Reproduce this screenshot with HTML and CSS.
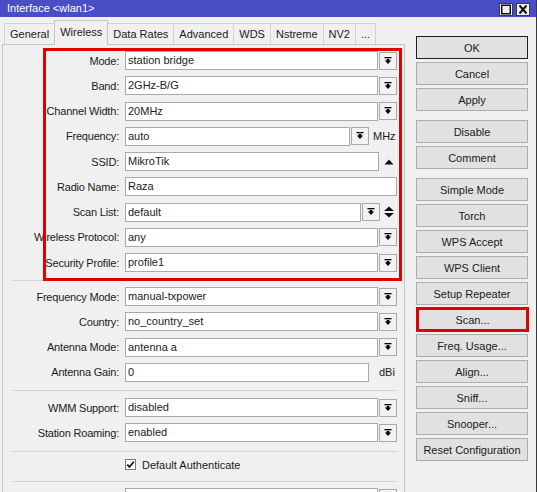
FILE: index.html
```html
<!DOCTYPE html>
<html>
<head>
<meta charset="utf-8">
<title>Interface &lt;wlan1&gt;</title>
<link rel="stylesheet" href="styles.css">
</head>
<body>
<svg class="defs" width="0" height="0" aria-hidden="true">
  <defs>
    <symbol id="dd" viewBox="0 0 16 16">
      <rect x="4.5" y="4" width="7" height="1.3" fill="#000"/>
      <polygon points="6.7,6 9.3,6 9.3,7.6 11.2,7.6 8,11 4.8,7.6 6.7,7.6" fill="#000"/>
    </symbol>
  </defs>
</svg>
<div class="window">
  <div class="titlebar">
    <span class="title">Interface &lt;wlan1&gt;</span>
    <div class="tbtns">
      <span class="tbtn"><svg width="12" height="11" viewBox="0 0 12 11"><rect x="1.75" y="1.25" width="8.5" height="8.5" fill="none" stroke="#111" stroke-width="1.5"/></svg></span>
      <span class="tbtn"><svg width="12" height="11" viewBox="0 0 12 11"><path d="M2.5 1.5 L9.5 9.5 M9.5 1.5 L2.5 9.5" stroke="#111" stroke-width="2"/></svg></span>
    </div>
  </div>
  <div class="main">
    <div class="left">
      <div class="tabs">
        <span class="tab">General</span>
        <span class="tab active">Wireless</span>
        <span class="tab">Data Rates</span>
        <span class="tab">Advanced</span>
        <span class="tab">WDS</span>
        <span class="tab">Nstreme</span>
        <span class="tab">NV2</span>
        <span class="tab">...</span>
      </div>
      <div class="panel">
        <div class="mark"></div>
        <div class="group">
          <div class="row"><span class="lbl">Mode:</span><span class="inp">station bridge</span><span class="dd"><svg width="16" height="16"><use href="#dd"/></svg></span></div>
          <div class="row"><span class="lbl">Band:</span><span class="inp">2GHz-B/G</span><span class="dd"><svg width="16" height="16"><use href="#dd"/></svg></span></div>
          <div class="row"><span class="lbl">Channel Width:</span><span class="inp">20MHz</span><span class="dd"><svg width="16" height="16"><use href="#dd"/></svg></span></div>
          <div class="row"><span class="lbl">Frequency:</span><span class="inp w-freq">auto</span><span class="dd"><svg width="16" height="16"><use href="#dd"/></svg></span><span class="unit u-mhz">MHz</span></div>
          <div class="row"><span class="lbl">SSID:</span><span class="inp w-ssid">MikroTik</span><span class="arr-up"><svg width="10" height="6" viewBox="0 0 10 6"><polygon points="0.5,5.5 9.5,5.5 5,0.5" fill="#111"/></svg></span></div>
          <div class="row"><span class="lbl">Radio Name:</span><span class="inp w-full">Raza</span></div>
          <div class="row"><span class="lbl">Scan List:</span><span class="inp w-scan">default</span><span class="dd"><svg width="16" height="16"><use href="#dd"/></svg></span><span class="arr-ud"><svg width="12" height="12" viewBox="0 0 12 12"><polygon points="1,5 11,5 6,0.5" fill="#111"/><polygon points="1,7 11,7 6,11.5" fill="#111"/></svg></span></div>
          <div class="row"><span class="lbl">Wireless Protocol:</span><span class="inp">any</span><span class="dd"><svg width="16" height="16"><use href="#dd"/></svg></span></div>
          <div class="row"><span class="lbl">Security Profile:</span><span class="inp">profile1</span><span class="dd"><svg width="16" height="16"><use href="#dd"/></svg></span></div>
        </div>
        <div class="sep sep-1"></div>
        <div class="group">
          <div class="row"><span class="lbl">Frequency Mode:</span><span class="inp">manual-txpower</span><span class="dd"><svg width="16" height="16"><use href="#dd"/></svg></span></div>
          <div class="row"><span class="lbl">Country:</span><span class="inp">no_country_set</span><span class="dd"><svg width="16" height="16"><use href="#dd"/></svg></span></div>
          <div class="row"><span class="lbl">Antenna Mode:</span><span class="inp">antenna a</span><span class="dd"><svg width="16" height="16"><use href="#dd"/></svg></span></div>
          <div class="row"><span class="lbl">Antenna Gain:</span><span class="inp w-gain">0</span><span class="unit u-dbi">dBi</span></div>
        </div>
        <div class="sep sep-2"></div>
        <div class="group">
          <div class="row"><span class="lbl">WMM Support:</span><span class="inp">disabled</span><span class="dd"><svg width="16" height="16"><use href="#dd"/></svg></span></div>
          <div class="row"><span class="lbl">Station Roaming:</span><span class="inp">enabled</span><span class="dd"><svg width="16" height="16"><use href="#dd"/></svg></span></div>
        </div>
        <div class="sep sep-3"></div>
        <div class="row check-row">
          <span class="cbox"><svg width="9" height="9" viewBox="0 0 9 9"><path d="M1.2 4.6 L3.5 7 L7.8 1.8" fill="none" stroke="#111" stroke-width="1.8"/></svg></span>
          <span class="ctext">Default Authenticate</span>
        </div>
        <div class="sep sep-4"></div>
        <div class="group">
          <div class="row"><span class="lbl"></span><span class="inp"></span><span class="dd"><svg width="16" height="16"><use href="#dd"/></svg></span></div>
        </div>
      </div>
    </div>
    <div class="right">
      <div class="btn default">OK</div>
      <div class="btn">Cancel</div>
      <div class="btn gap">Apply</div>
      <div class="btn">Disable</div>
      <div class="btn gap">Comment</div>
      <div class="btn">Simple Mode</div>
      <div class="btn">Torch</div>
      <div class="btn">WPS Accept</div>
      <div class="btn">WPS Client</div>
      <div class="btn">Setup Repeater</div>
      <div class="btn scan">Scan...</div>
      <div class="btn">Freq. Usage...</div>
      <div class="btn">Align...</div>
      <div class="btn">Sniff...</div>
      <div class="btn">Snooper...</div>
      <div class="btn">Reset Configuration</div>
    </div>
  </div>
</div>
</body>
</html>
```

FILE: styles.css
```css
* { box-sizing: border-box; }
html, body { margin: 0; padding: 0; }
body {
  width: 537px;
  height: 492px;
  overflow: hidden;
  background: #f0f0f0;
  font-family: "Liberation Sans", Arial, sans-serif;
  font-size: 11px;
  color: #1b1b1b;
}
.defs { position: absolute; width: 0; height: 0; }

.window {
  width: 537px;
  height: 492px;
  display: flex;
  flex-direction: column;
  background: #f0f0f0;
  border-right: 1px solid #3a3a3a;
}

.titlebar {
  flex: none;
  height: 17px;
  background: #4a4ec6;
  color: #fff;
  display: flex;
  align-items: flex-start;
  padding-left: 7px;
}
.title { flex: 1; line-height: 17px; }
.tbtns { display: flex; gap: 3px; margin-top: 3px; margin-right: 6px; }
.tbtn {
  width: 14px;
  height: 13px;
  background: #f0f0f0;
  border: 1px solid #3c3c3c;
  display: flex;
  align-items: center;
  justify-content: center;
}

.main { flex: 1; display: flex; min-height: 0; }

.left {
  width: 403px;
  margin-left: 2px;
  display: flex;
  flex-direction: column;
}
.tabs {
  flex: none;
  height: 27px;
  display: flex;
  align-items: flex-end;
  padding-left: 2px;
}
.tab {
  height: 21px;
  padding: 0 5px;
  border: 1px solid #d2d2d2;
  border-bottom: none;
  margin-right: -1px;
  background: #f0f0f0;
  display: flex;
  align-items: center;
  white-space: nowrap;
}
.tab.active {
  position: relative;
  z-index: 1;
  height: 25px;
  margin-bottom: -1px;
  padding-bottom: 3px;
  border-color: #c6c6c6;
}

.panel {
  flex: 1;
  position: relative;
  border: 1px solid #c6c6c6;
  border-bottom: none;
  padding: 6px 7px 0 0;
}
.mark {
  position: absolute;
  left: 40px;
  top: 3px;
  width: 359px;
  height: 233px;
  border: 3px solid #e10000;
  pointer-events: none;
  z-index: 2;
}

.group { display: flex; flex-direction: column; gap: 6.25px; }
.row { display: flex; align-items: center; height: 19px; }
.lbl {
  flex: none;
  width: 116px;
  margin-right: 6px;
  text-align: right;
  white-space: nowrap;
  letter-spacing: -0.2px;
}
.inp {
  flex: none;
  width: 253px;
  height: 19px;
  background: #fff;
  border: 1px solid #a9a9a9;
  padding: 0 2px;
  line-height: 17px;
  white-space: nowrap;
  overflow: hidden;
}
.inp.w-full { width: 272px; }
.inp.w-freq { width: 225px; }
.inp.w-ssid { width: 254px; }
.inp.w-scan { width: 236px; }
.inp.w-gain { width: 244px; }

.dd {
  flex: none;
  width: 18px;
  height: 18px;
  margin-left: 1px;
  border: 1px solid #a9a9a9;
  background: #f2f2f2;
  display: flex;
}
.unit { flex: none; white-space: nowrap; }
.u-mhz { margin-left: 4px; }
.u-dbi { margin-left: 10px; }
.arr-up { margin-left: 5px; display: flex; }
.arr-ud { margin-left: 3px; display: flex; }

.sep { height: 1px; background: #d3d3d3; margin-left: 9px; margin-right: 0; }
.sep-1 { margin-top: 8px; margin-bottom: 6px; }
.sep-2 { margin-top: 8.25px; margin-bottom: 7px; }
.sep-3 { margin-top: 8.75px; margin-bottom: 3px; }
.sep-4 { margin-top: 7px; margin-bottom: 6px; }

.check-row { padding-left: 122px; }
.cbox {
  flex: none;
  width: 11px;
  height: 11px;
  background: #fff;
  border: 1px solid #7a7a7a;
  display: flex;
  align-items: center;
  justify-content: center;
}
.ctext { margin-left: 6px; white-space: nowrap; }

.right {
  width: 112px;
  margin-left: 11px;
  padding-top: 19px;
  display: flex;
  flex-direction: column;
}
.btn {
  flex: none;
  height: 23px;
  margin-bottom: 3px;
  border: 1px solid #adadad;
  background: #e1e1e1;
  display: flex;
  align-items: center;
  justify-content: center;
  white-space: nowrap;
}
.btn.default { border-color: #1e1e1e; }
.btn.gap { margin-bottom: 9px; }
.btn.scan {
  width: 113px;
  height: 25px;
  margin-top: -1px;
  margin-bottom: 2px;
  border: 3px solid #e10000;
}
```
